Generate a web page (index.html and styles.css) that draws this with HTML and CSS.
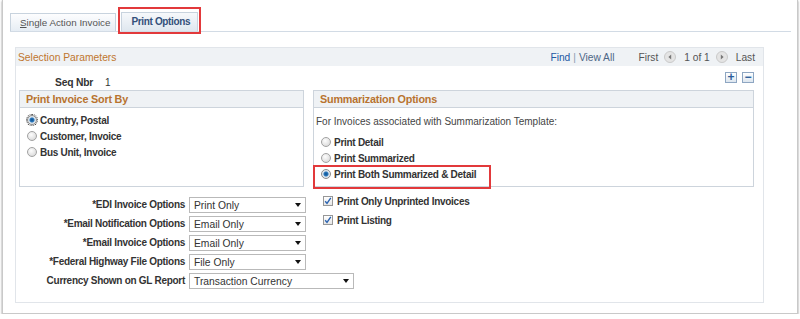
FILE: index.html
```html
<!DOCTYPE html>
<html lang="en">

<head>
    <meta charset="UTF-8">
    <title>Print Options</title>
    <link rel="stylesheet" href="styles.css">
</head>

<body>
    <div class="frame">
        <div class="tabs">
            <div class="tab"><u>S</u>ingle Action Invoice</div>
            <div class="tab active">Print Options</div>
        </div>

        <div class="group">
            <div class="group-head">
                <span class="title">Selection Parameters</span>
                <div class="nav">
                    <span class="link">Find</span>
                    <span class="sep">|</span>
                    <span class="link2">View All</span>
                    <span class="first">First</span>
                    <svg class="arrow" width="12" height="12" viewBox="0 0 12 12">
                        <circle cx="6" cy="6" r="5.5" fill="#e4e4e4" stroke="#c9c9c9" />
                        <path d="M7.2 3.5 L4.4 6 L7.2 8.5 Z" fill="#777" />
                    </svg>
                    <span>1 of 1</span>
                    <svg class="arrow" width="12" height="12" viewBox="0 0 12 12">
                        <circle cx="6" cy="6" r="5.5" fill="#e4e4e4" stroke="#c9c9c9" />
                        <path d="M4.8 3.5 L7.6 6 L4.8 8.5 Z" fill="#777" />
                    </svg>
                    <span>Last</span>
                </div>
            </div>

            <div class="group-body">
                <div class="seq-row">
                    <span class="seq-label">Seq Nbr</span>
                    <span class="seq-value">1</span>
                    <div class="row-btns">
                        <span class="mini">+</span>
                        <span class="mini">&minus;</span>
                    </div>
                </div>

                <div class="boxes">
                    <div class="box">
                        <div class="box-head">Print Invoice Sort By</div>
                        <div class="box-body sort">
                            <div class="choice"><span class="radio on focus"></span>Country, Postal</div>
                            <div class="choice"><span class="radio"></span>Customer, Invoice</div>
                            <div class="choice"><span class="radio"></span>Bus Unit, Invoice</div>
                        </div>
                    </div>
                    <div class="box">
                        <div class="box-head">Summarization Options</div>
                        <div class="box-body summ">
                            <div class="note">For Invoices associated with Summarization Template:</div>
                            <div class="choice"><span class="radio"></span>Print Detail</div>
                            <div class="choice"><span class="radio"></span>Print Summarized</div>
                            <div class="choice marked"><span class="radio on"></span>Print Both Summarized &amp; Detail</div>
                        </div>
                    </div>
                </div>

                <div class="options">
                    <label>*EDI Invoice Options</label>
                    <div class="select"><span>Print Only</span><i></i></div>
                    <div class="check"><span class="box-check"><svg width="10" height="10" viewBox="0 0 10 10"><path d="M2.2 5.2 L4 7.4 L7.8 1.8" fill="none" stroke="#2b63b0" stroke-width="1.4" /></svg></span>Print Only Unprinted Invoices</div>

                    <label>*Email Notification Options</label>
                    <div class="select"><span>Email Only</span><i></i></div>
                    <div class="check"><span class="box-check"><svg width="10" height="10" viewBox="0 0 10 10"><path d="M2.2 5.2 L4 7.4 L7.8 1.8" fill="none" stroke="#2b63b0" stroke-width="1.4" /></svg></span>Print Listing</div>

                    <label>*Email Invoice Options</label>
                    <div class="select"><span>Email Only</span><i></i></div>
                    <div></div>

                    <label>*Federal Highway File Options</label>
                    <div class="select"><span>File Only</span><i></i></div>
                    <div></div>

                    <label>Currency Shown on GL Report</label>
                    <div class="select wide"><span>Transaction Currency</span><i></i></div>
                </div>
            </div>
        </div>
    </div>
</body>

</html>
```

FILE: styles.css
```css
* {
    margin: 0;
    padding: 0;
    box-sizing: border-box;
}

body {
    font-family: 'Liberation Sans', Arial, sans-serif;
    font-size: 10px;
    color: #333;
    background: #fff;
}

.frame {
    margin-left: 2px;
    width: 796px;
    height: 314px;
    border: 1px solid #c9c9c9;
    border-top: none;
    box-shadow: 0 1px 2px rgba(0, 0, 0, 0.45);
}

/* tabs */

.tabs {
    display: flex;
    align-items: flex-end;
    gap: 5px;
    margin-left: 7px;
    margin-right: 6px;
    padding-top: 12px;
    border-bottom: 1px solid #d2dbe5;
}

.tab {
    height: 18px;
    padding: 0 5px 0 9px;
    line-height: 17px;
    color: #555;
    font-size: 9.8px;
    border: 1px solid #c8d3de;
    border-bottom: none;
    background: linear-gradient(#fdfdfe, #e6edf4);
}

.tab.active {
    position: relative;
    height: 19px;
    padding: 0 7px 0 9px;
    font-weight: bold;
    font-size: 10px;
    letter-spacing: -0.35px;
    color: #33507a;
    background: linear-gradient(#f6f8fb, #dfe7ef);
}

.tab.active::after {
    content: "";
    position: absolute;
    top: -6px;
    left: -4px;
    right: -4px;
    bottom: -3px;
    border: 2px solid #e2393b;
}

/* selection parameters */

.group {
    margin: 15px 0 0 12px;
    width: 749px;
    height: 256px;
    border: 1px solid #e1e5ea;
}

.group-head {
    display: flex;
    align-items: center;
    justify-content: space-between;
    height: 18px;
    padding: 0 8px 0 2px;
    background: #eff2f5;
}

.title {
    color: #c0762e;
    font-size: 10.3px;
}

.nav {
    display: flex;
    align-items: center;
    color: #555;
    font-size: 10.2px;
}

.nav .link {
    color: #2358a3;
}

.nav .sep {
    margin: 0 3px 0 3px;
    color: #8a9bb0;
}

.nav .link2 {
    color: #4d6685;
}

.nav .first {
    margin-left: 24px;
}

.nav .arrow {
    margin: 0 8px 0 6px;
}

.group-body {
    padding: 0 9px 0 3px;
}

.seq-row {
    display: flex;
    align-items: flex-start;
    height: 24px;
}

.seq-label {
    margin: 11px 0 0 36px;
    font-weight: bold;
    font-size: 10.3px;
    letter-spacing: -0.2px;
    color: #333;
}

.seq-value {
    margin: 11px 0 0 12px;
}

.row-btns {
    display: flex;
    gap: 5px;
    margin: 6px 0 0 auto;
}

.mini {
    width: 12px;
    height: 11px;
    border: 1px solid #8ea6c2;
    background: linear-gradient(#fff, #dde6ef);
    color: #2a5d9a;
    font-weight: bold;
    font-size: 12px;
    line-height: 8px;
    text-align: center;
}

/* boxes */

.boxes {
    display: grid;
    grid-template-columns: 285px 441px;
    gap: 9px;
    height: 97px;
}

.box {
    border: 1px solid #cdd4dc;
}

.box-head {
    height: 17px;
    line-height: 16px;
    padding-left: 6px;
    font-weight: bold;
    font-size: 10.8px;
    letter-spacing: -0.2px;
    color: #b8732f;
    background: #eff2f5;
    border-bottom: 1px solid #cdd4dc;
}

.box-body.sort {
    padding: 4px 0 0 7px;
}

.box-body.summ {
    padding: 6px 0 0 2px;
}

.note {
    height: 16px;
    line-height: 16px;
    color: #444;
    margin-bottom: 4px;
}

.summ .choice {
    margin-left: 5px;
}

.choice {
    position: relative;
    display: flex;
    align-items: center;
    gap: 3px;
    height: 16px;
    font-weight: bold;
    letter-spacing: -0.28px;
    color: #333;
}

.choice.marked::after {
    content: "";
    position: absolute;
    left: -8px;
    top: -1px;
    width: 174px;
    height: 20px;
    border: 2px solid #e2393b;
}

.radio {
    width: 10px;
    height: 10px;
    border-radius: 50%;
    border: 1px solid #a2a2a2;
    background: radial-gradient(circle at 40% 35%, #fdfdfd, #d2d2d2);
}

.radio.on {
    border-color: #8c8c8c;
    background: radial-gradient(circle at 50% 50%, #0d4f8c 0, #2a78bd 2px, #d9e2ea 3px, #eef1f4 5px);
}

.radio.focus {
    outline: 1px dotted #333;
    outline-offset: 0;
}

/* options */

.options {
    display: grid;
    grid-template-columns: 166px 130px 1fr;
    grid-auto-rows: 19px;
    column-gap: 4px;
    margin-top: 10px;
}

.options label {
    text-align: right;
    font-weight: bold;
    letter-spacing: -0.28px;
    line-height: 16px;
    color: #333;
}

.select {
    display: flex;
    align-items: center;
    justify-content: space-between;
    width: 117px;
    height: 16px;
    padding: 0 4px 0 4px;
    border: 1px solid #b9b9b9;
    background: #fff;
    color: #333;
    font-size: 10.3px;
}

.select.wide {
    width: 165px;
    grid-column: 2 / 4;
}

.select i {
    border-left: 3px solid transparent;
    border-right: 3px solid transparent;
    border-top: 4px solid #111;
}

.check {
    display: flex;
    align-items: center;
    gap: 4px;
    height: 10px;
    margin-top: -1px;
    font-weight: bold;
    letter-spacing: -0.28px;
    color: #333;
}

.box-check {
    display: block;
    width: 10px;
    height: 10px;
    border: 1px solid #979797;
    background: linear-gradient(#fff, #e6e6e6);
}

.box-check svg {
    display: block;
    margin: -1px 0 0 -1px;
}
```
